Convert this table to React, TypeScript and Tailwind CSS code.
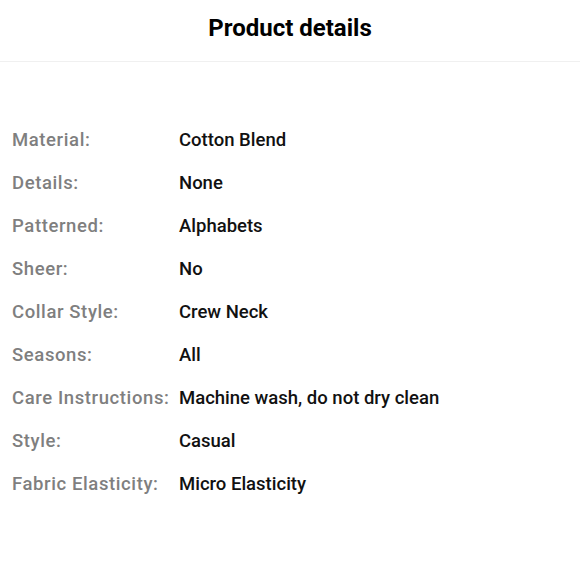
const rows = [
  { label: 'Material:', value: 'Cotton Blend' },
  { label: 'Details:', value: 'None' },
  { label: 'Patterned:', value: 'Alphabets' },
  { label: 'Sheer:', value: 'No' },
  { label: 'Collar Style:', value: 'Crew Neck' },
  { label: 'Seasons:', value: 'All' },
  { label: 'Care Instructions:', value: 'Machine wash, do not dry clean' },
  { label: 'Style:', value: 'Casual' },
  { label: 'Fabric Elasticity:', value: 'Micro Elasticity' },
];

export default function App() {
  return (
    <div className="h-[580px] w-[580px] bg-white font-['Roboto',sans-serif]">
      {/* Header */}
      <header className="flex h-[62px] items-center justify-center border-b border-[#f0f0f0]">
        <h1 className="-mt-1.5 text-[24px] font-bold text-black">Product details</h1>
      </header>

      {/* Attribute list */}
      <div className="px-3 pt-[57px]">
        {rows.map((row) => (
          <div key={row.label} className="flex h-[43px] items-center text-[18.5px] font-medium">
            <span className="w-[167px] shrink-0 tracking-[0.6px] text-[#7f7f7f]">{row.label}</span>
            <span className="text-[#111]">{row.value}</span>
          </div>
        ))}
      </div>
    </div>
  );
}
